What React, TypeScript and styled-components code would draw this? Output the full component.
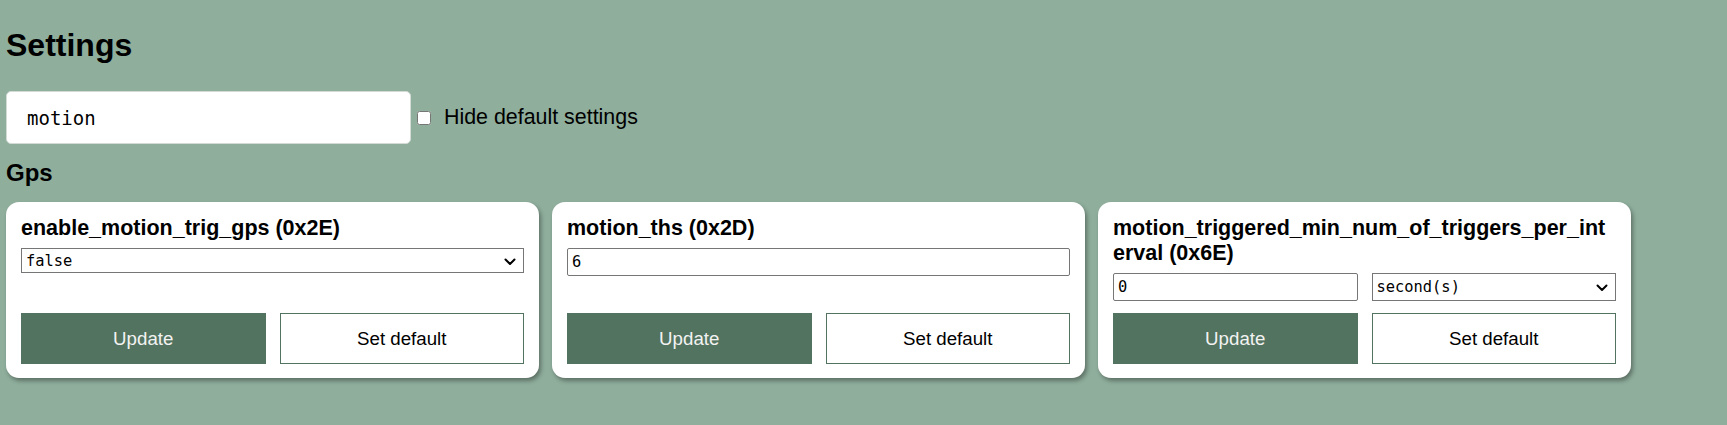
import React from "react";
import styled, { createGlobalStyle } from "styled-components";

const GlobalStyle = createGlobalStyle`
  html, body {
    margin: 0;
    padding: 0;
    background: #8fae9c;
  }
  body {
    font-family: "Liberation Sans", Arial, sans-serif;
    color: #000;
  }
`;

const Page = styled.div`
  padding: 27px 6px 40px;
  font-family: "Liberation Sans", Arial, sans-serif;
`;

const Title = styled.h1`
  margin: 0 0 27px;
  font-size: 32px;
  font-weight: 700;
  line-height: normal;
`;

const Toolbar = styled.div`
  display: flex;
  align-items: center;
`;

const Search = styled.input`
  box-sizing: border-box;
  width: 405px;
  height: 53px;
  padding: 0 20px;
  border: 1px solid #d4dbd6;
  border-radius: 5px;
  background: #fff;
  font-family: "DejaVu Sans Mono", "Liberation Mono", monospace;
  font-size: 19px;
  color: #000;
  outline: none;
`;

const CheckLabel = styled.label`
  display: flex;
  align-items: center;
  font-size: 21.4px;
  color: #000;
`;

const Check = styled.input`
  width: 14px;
  height: 14px;
  margin: 0 13px 0 6px;
`;

const Section = styled.h2`
  margin: 15px 0 15px;
  font-size: 24px;
  font-weight: 700;
  line-height: normal;
`;

const Cards = styled.div`
  display: flex;
  gap: 13px;
  align-items: stretch;
`;

const Card = styled.div`
  box-sizing: border-box;
  width: 533px;
  padding: 14px 15px;
  background: #fff;
  border-radius: 13px;
  box-shadow: 2px 3px 4px rgba(0, 0, 0, 0.35);
  display: flex;
  flex-direction: column;
`;

const CardTitle = styled.h3`
  margin: 0 0 7px;
  font-size: 21.5px;
  font-weight: 700;
  line-height: normal;
  overflow-wrap: anywhere;
`;

const Fields = styled.div<{ $cols: number }>`
  display: grid;
  grid-template-columns: repeat(${(p) => p.$cols}, 1fr);
  gap: 14px;
  align-items: start;
`;

const TextField = styled.input`
  box-sizing: border-box;
  width: 100%;
  height: 28px;
  padding: 1px 4px;
  border: 1px solid #767676;
  border-radius: 2px;
  background: #fff;
  font-family: "DejaVu Sans Mono", "Liberation Mono", monospace;
  font-size: 15.4px;
  color: #000;
`;

const SelectWrap = styled.div`
  position: relative;
  width: 100%;
`;

const Select = styled.select<{ $tall?: boolean }>`
  box-sizing: border-box;
  display: block;
  width: 100%;
  height: ${(p) => (p.$tall ? "28px" : "25px")};
  padding: 0 28px 0 4px;
  border: 1px solid #767676;
  border-radius: 0;
  background: #fff;
  appearance: none;
  -webkit-appearance: none;
  font-family: "DejaVu Sans Mono", "Liberation Mono", monospace;
  font-size: 15.4px;
  color: #000;
`;

const Chevron = styled.svg`
  position: absolute;
  right: 8px;
  top: 50%;
  width: 12px;
  height: 8px;
  margin-top: -3px;
  pointer-events: none;
`;

const Actions = styled.div`
  margin-top: auto;
  padding-top: 12px;
  display: grid;
  grid-template-columns: 1fr 1fr;
  gap: 14px;
`;

const Button = styled.button<{ $primary?: boolean }>`
  box-sizing: border-box;
  height: 51px;
  border: 1px solid #52735f;
  background: ${(p) => (p.$primary ? "#52735f" : "#fff")};
  color: ${(p) => (p.$primary ? "#f2f2f2" : "#000")};
  font-family: "Liberation Sans", Arial, sans-serif;
  font-size: 18.7px;
  cursor: pointer;
`;

function Dropdown({
  tall,
  defaultValue,
  options,
}: {
  tall?: boolean;
  defaultValue: string;
  options: string[];
}) {
  return (
    <SelectWrap>
      <Select $tall={tall} defaultValue={defaultValue}>
        {options.map((o) => (
          <option key={o} value={o}>
            {o}
          </option>
        ))}
      </Select>
      <Chevron viewBox="0 0 12 8" aria-hidden="true">
        <path d="M1.5 1.5 L6 6 L10.5 1.5" fill="none" stroke="#000" strokeWidth="2" strokeLinecap="round" strokeLinejoin="round" />
      </Chevron>
    </SelectWrap>
  );
}

function Actionbar() {
  return (
    <Actions>
      <Button $primary>Update</Button>
      <Button>Set default</Button>
    </Actions>
  );
}

export default function App() {
  return (
    <>
      <GlobalStyle />
      <Page>
        <Title>Settings</Title>
        <Toolbar>
          <Search defaultValue="motion" />
          <CheckLabel>
            <Check type="checkbox" />
            Hide default settings
          </CheckLabel>
        </Toolbar>
        <Section>Gps</Section>
        <Cards>
          <Card>
            <CardTitle>enable_motion_trig_gps (0x2E)</CardTitle>
            <Fields $cols={1}>
              <Dropdown defaultValue="false" options={["false", "true"]} />
            </Fields>
            <Actionbar />
          </Card>
          <Card>
            <CardTitle>motion_ths (0x2D)</CardTitle>
            <Fields $cols={1}>
              <TextField defaultValue="6" />
            </Fields>
            <Actionbar />
          </Card>
          <Card>
            <CardTitle>motion_triggered_min_num_of_triggers_per_interval (0x6E)</CardTitle>
            <Fields $cols={2}>
              <TextField defaultValue="0" />
              <Dropdown tall defaultValue="second(s)" options={["second(s)", "minute(s)", "hour(s)"]} />
            </Fields>
            <Actionbar />
          </Card>
        </Cards>
      </Page>
    </>
  );
}
